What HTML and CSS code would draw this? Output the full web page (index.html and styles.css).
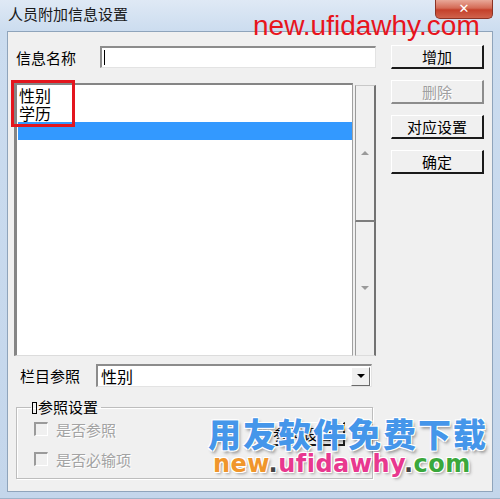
FILE: index.html
```html
<html>
<head>
    <title>人员附加信息设置</title>
    <link rel="stylesheet" href="styles.css">
</head>
<body>

<div class="window">
    <div class="titlebar">
        <span class="title">人员附加信息设置</span>
        <span class="close">&#x2715;</span>
    </div>

    <div class="client">
        <div class="main">
            <div class="name-row">
                <span class="label">信息名称</span>
                <span class="edit"><span class="caret"></span></span>
            </div>

            <div class="list-row">
                <div class="list">
                    <div class="item">性别</div>
                    <div class="item">学历</div>
                    <div class="item selected"></div>
                </div>
                <div class="scrollbar">
                    <div class="scroll-part"><span class="arrow up"></span></div>
                    <div class="scroll-part"><span class="arrow down"></span></div>
                </div>
                <div class="mark"></div>
            </div>

            <div class="combo-row">
                <span class="label">栏目参照</span>
                <span class="combo">
                    <span class="combo-text">性别</span>
                    <span class="drop"><span class="drop-arrow"></span></span>
                </span>
            </div>

            <fieldset class="group">
                <legend><span class="box"></span>参照设置</legend>
                <div class="group-body">
                    <div class="checks">
                        <label class="check"><span class="tick"></span>是否参照</label>
                        <label class="check"><span class="tick"></span>是否必输项</label>
                    </div>
                    <span class="btn ref-btn">参照设置</span>
                </div>
            </fieldset>
        </div>

        <div class="side">
            <span class="btn">增加</span>
            <span class="btn disabled">删除</span>
            <span class="btn">对应设置</span>
            <span class="btn">确定</span>
        </div>
    </div>

    <!-- site stamps laid over the dialog -->
    <div class="stamp-top">new.ufidawhy.com</div>
    <div class="stamp-bottom">
        <div class="stamp-cn">用友软件免费下载</div>
        <div class="stamp-url"><span class="orange">new</span><span class="dot">.</span><span class="pink">ufidawhy</span><span class="dot">.</span><span class="green">com</span></div>
    </div>
</div>

</body>
</html>
```

FILE: styles.css
```css
* {
    box-sizing: border-box;
}
html, body {
    margin: 0;
}
body {
    width: 500px;
    height: 499px;
    overflow: hidden;
    background: #fff;
    font-family: "Noto Sans CJK SC", "Liberation Sans", sans-serif;
    font-size: 15px;
    color: #000;
}

.window {
    position: relative;
    width: 500px;
    height: 499px;
    display: flex;
    flex-direction: column;
    padding: 0 7px 6px 7px;
    background: linear-gradient(#dfe9f5, #cbdcef 32px, #c4d6eb);
    border-bottom: 1px solid #9fb3c9;
}

/* caption */
.titlebar {
    height: 31px;
    display: flex;
    align-items: flex-start;
}
.title {
    padding: 4px 0 0 1px;
    line-height: 20px;
    font-size: 15px;
    color: #1a1a1a;
}
.close {
    margin-left: auto;
    width: 58px;
    height: 19px;
    border: 1px solid #8b3325;
    border-top: none;
    border-radius: 0 0 5px 5px;
    background: linear-gradient(#e9a898, #d46a55 45%, #c4402a 55%, #d0634c);
    color: #fff;
    font-family: "DejaVu Sans", sans-serif;
    font-weight: bold;
    font-size: 13px;
    line-height: 18px;
    text-align: center;
}

.client {
    flex: 1;
    display: flex;
    background: #f0f0f0;
    border: 1px solid #8fa4bb;
}

.main {
    width: 368px;
    display: flex;
    flex-direction: column;
}

.name-row {
    display: flex;
    align-items: center;
    height: 22px;
    margin-top: 14px;
    padding-left: 8px;
}
.name-row .label {
    width: 84px;
}
.edit {
    width: 278px;
    height: 22px;
    background: #fff;
    border-top: 2px solid #8c8c8c;
    border-left: 2px solid #8c8c8c;
    border-right: 1px solid #e3e3e3;
    border-bottom: 1px solid #e3e3e3;
    padding: 2px 0 0 2px;
}
.caret {
    display: block;
    width: 1px;
    height: 15px;
    background: #000;
}

/* list box with its detached scrollbar */
.list-row {
    position: relative;
    display: flex;
    margin: 15px 0 0 6px;
    height: 273px;
}
.list {
    width: 339px;
    background: #fff;
    border-top: 2px solid #858585;
    border-left: 3px solid #858585;
    border-right: 1px solid #a0a0a0;
    border-bottom: 1px solid #dcdcdc;
    padding: 1px 0 0 1px;
}
.item {
    height: 18px;
    line-height: 18px;
    font-size: 16px;
    padding-left: 1px;
}
.item.selected {
    background: #3399ff;
}
.scrollbar {
    width: 21px;
    margin: 2px 0 0 2px;
    display: flex;
    flex-direction: column;
}
.scroll-part {
    flex: 1;
    display: flex;
    align-items: center;
    justify-content: center;
    border-left: 1px solid #9a9a9a;
    border-right: 2px solid #727272;
    border-bottom: 1px solid #dcdcdc;
}
.scroll-part:first-child {
    border-top: 1px solid #c8c8c8;
    border-bottom: 2px solid #7d7d7d;
}
.arrow {
    width: 0;
    height: 0;
    border-left: 4px solid transparent;
    border-right: 4px solid transparent;
}
.arrow.up {
    border-bottom: 4px solid #9a9a9a;
}
.arrow.down {
    border-top: 4px solid #9a9a9a;
}
.mark {
    position: absolute;
    left: -3px;
    top: -3px;
    width: 64px;
    height: 47px;
    border: 3px solid #e3161e;
}

.combo-row {
    display: flex;
    align-items: center;
    height: 23px;
    margin-top: 8px;
    padding-left: 12px;
}
.combo-row .label {
    width: 76px;
}
.combo {
    width: 276px;
    height: 23px;
    display: flex;
    align-items: center;
    background: #fff;
    border-top: 2px solid #8c8c8c;
    border-left: 2px solid #8c8c8c;
    border-right: 1px solid #e3e3e3;
    border-bottom: 1px solid #e3e3e3;
    padding-left: 3px;
}
.combo-text {
    flex: 1;
    font-size: 16px;
}
.drop {
    width: 19px;
    height: 19px;
    margin-right: 1px;
    display: flex;
    align-items: center;
    justify-content: center;
    background: #f0f0f0;
    border-top: 1px solid #fff;
    border-left: 1px solid #fff;
    border-right: 1px solid #6a6a6a;
    border-bottom: 1px solid #6a6a6a;
}
.drop-arrow {
    border-left: 4px solid transparent;
    border-right: 4px solid transparent;
    border-top: 4px solid #000;
}

/* reference settings group */
.group {
    margin: 11px 0 0 8px;
    width: 357px;
    height: 81px;
    padding: 0 0 0 17px;
    border: 1px solid #bdbdbd;
    box-shadow: inset 1px 1px #fff, 1px 1px #fff;
}
.group legend {
    padding: 0 3px 0 1px;
    margin-left: -3px;
    line-height: 18px;
    font-size: 15px;
}
.box {
    display: inline-block;
    width: 5px;
    height: 12px;
    border: 1.5px solid #000;
    margin-right: 1px;
    vertical-align: -1px;
}
.group-body {
    display: flex;
    align-items: flex-start;
}
.checks {
    display: flex;
    flex-direction: column;
    gap: 14px;
    padding-top: 5px;
}
.check {
    display: flex;
    align-items: center;
    height: 16px;
    color: #a3a3a3;
    text-shadow: 1px 1px #fff;
}
.tick {
    width: 14px;
    height: 14px;
    margin-right: 8px;
    border-top: 2px solid #9a9a9a;
    border-left: 2px solid #9a9a9a;
    border-right: 1px solid #fff;
    border-bottom: 1px solid #fff;
}
.ref-btn {
    margin: 6px 0 0 auto;
    margin-right: 27px;
    width: 83px;
    height: 21px;
    line-height: 18px;
}

/* push buttons */
.side {
    width: 93px;
    margin: 13px 0 0 15px;
    display: flex;
    flex-direction: column;
    gap: 11px;
}
.btn {
    display: block;
    height: 24px;
    line-height: 21px;
    text-align: center;
    background: #f0f0f0;
    border-top: 1px solid #fff;
    border-left: 1px solid #fff;
    border-right: 2px solid #1a1a1a;
    border-bottom: 2px solid #1a1a1a;
}
.btn.disabled {
    color: #a0a0a0;
    text-shadow: 1px 1px #fff;
    border-right-color: #8c8c8c;
    border-bottom-color: #8c8c8c;
}

/* overlaid stamps */
.stamp-top {
    position: absolute;
    left: 253px;
    top: 12px;
    font-family: "Liberation Sans", sans-serif;
    font-size: 28px;
    line-height: 1;
    color: #e8141c;
}
.stamp-bottom {
    position: absolute;
    left: 208px;
    top: 412px;
}
.stamp-cn {
    font-size: 33px;
    font-weight: 900;
    line-height: 42px;
    letter-spacing: 2px;
    color: #4596ea;
    text-shadow: -1px -1px 0 #fff, 1px -1px 0 #fff, -1px 1px 0 #fff, 1px 1px 0 #fff,
                 2px 3px 3px rgba(60, 60, 60, 0.45);
}
.stamp-url {
    margin: -4px 0 0 5px;
    font-family: "DejaVu Sans", sans-serif;
    font-weight: bold;
    font-size: 24px;
    line-height: 28px;
    letter-spacing: 0.5px;
    text-shadow: -1px -1px 0 #fff, 1px -1px 0 #fff, -1px 1px 0 #fff, 1px 1px 0 #fff,
                 2px 2px 3px rgba(60, 60, 60, 0.45);
}
.orange {
    color: #f0962c;
}
.pink {
    color: #e8388f;
}
.green {
    color: #3aa83c;
}
.dot {
    color: #444;
}
```
